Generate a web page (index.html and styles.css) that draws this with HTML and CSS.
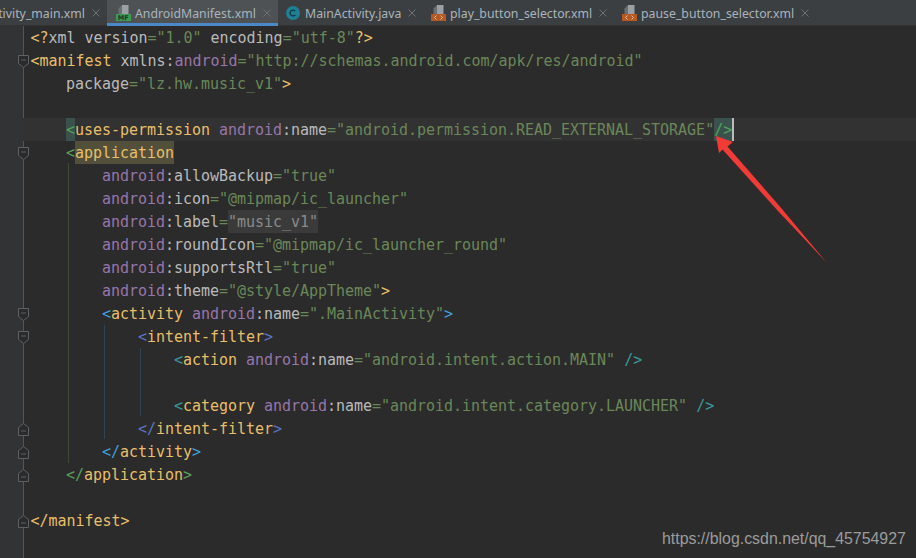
FILE: index.html
```html
<!DOCTYPE html>
<html lang="en">
<head>
<meta charset="utf-8">
<title>AndroidManifest.xml</title>
<link rel="stylesheet" href="styles.css">
</head>
<body>
<div class="ide">
  <div class="tabs">
    <div class="tab tab-first"><span class="tab-name">ctivity_main.xml</span><svg class="close" viewBox="0 0 8 8"><path d="M.5.5l7 7M7.500.5l-7 7"/></svg></div>
    <div class="tab tab-active">
      <svg class="file-icon" viewBox="0 0 15 16"><path class="fold-corner" d="M2.500 9V3.500L6 0v9z"/><path class="fold-light" d="M6 0h6.500v9H6z"/><rect class="mf-bg" x="0" y="9" width="15" height="7"/><text class="mf-text" x="1.800" y="15">MF</text></svg>
      <span class="tab-name">AndroidManifest.xml</span><svg class="close" viewBox="0 0 8 8"><path d="M.5.5l7 7M7.500.5l-7 7"/></svg></div>
    <div class="tab tab-class">
      <svg class="class-icon" viewBox="0 0 14 14"><circle cx="7" cy="7" r="7" fill="#1f7f94"/><path d="M9.300 5.200A2.900 2.900 0 1 0 9.300 8.800" fill="none" stroke="#0e3640" stroke-width="1.300"/></svg>
      <span class="tab-name">MainActivity.java</span><svg class="close" viewBox="0 0 8 8"><path d="M.5.5l7 7M7.500.5l-7 7"/></svg></div>
    <div class="tab tab-play">
      <svg class="file-icon" viewBox="0 0 15 16"><path class="fold-corner" d="M2.500 9V3.500L6 0v9z"/><path class="fold-light" d="M6 0h6.500v9H6z"/><rect class="xml-bg" x="0" y="9" width="15" height="7"/><path class="xml-mark" d="M5.500 10.500l-2 2 2 2M9.500 10.500l2 2-2 2"/></svg>
      <span class="tab-name">play_button_selector.xml</span><svg class="close" viewBox="0 0 8 8"><path d="M.5.5l7 7M7.500.5l-7 7"/></svg></div>
    <div class="tab">
      <svg class="file-icon" viewBox="0 0 15 16"><path class="fold-corner" d="M2.500 9V3.500L6 0v9z"/><path class="fold-light" d="M6 0h6.500v9H6z"/><rect class="xml-bg" x="0" y="9" width="15" height="7"/><path class="xml-mark" d="M5.500 10.500l-2 2 2 2M9.500 10.500l2 2-2 2"/></svg>
      <span class="tab-name">pause_button_selector.xml</span><svg class="close" viewBox="0 0 8 8"><path d="M.5.5l7 7M7.500.5l-7 7"/></svg></div>
  </div>
  <div class="editor">
    <div class="gutter">
      <span class="fold-line"></span>
      <svg class="fold f2" viewBox="0 0 11 13"><path d="M.5.500h10v8l-5 4-5-4zM3 5h5"/></svg>
      <svg class="fold f6" viewBox="0 0 11 13"><path d="M.5.500h10v8l-5 4-5-4zM3 5h5"/></svg>
      <svg class="fold f13" viewBox="0 0 11 13"><path d="M.5.500h10v8l-5 4-5-4zM3 5h5"/></svg>
      <svg class="fold f14" viewBox="0 0 11 13"><path d="M.5.500h10v8l-5 4-5-4zM3 5h5"/></svg>
      <svg class="fold f18" viewBox="0 0 11 13"><path d="M.5 12.500h10v-8l-5-4-5 4zM3 8h5"/></svg>
      <svg class="fold f19" viewBox="0 0 11 13"><path d="M.5 12.500h10v-8l-5-4-5 4zM3 8h5"/></svg>
      <svg class="fold f20" viewBox="0 0 11 13"><path d="M.5 12.500h10v-8l-5-4-5 4zM3 8h5"/></svg>
      <svg class="fold f22" viewBox="0 0 11 13"><path d="M.5 12.500h10v-8l-5-4-5 4zM3 8h5"/></svg>
    </div>
    <div class="code">
      <span class="guide g-app"></span><span class="guide g-act"></span><span class="guide g-filter"></span>
      <div class="line"><span class="o">&lt;?</span><span class="n">xml</span> <span class="n">version</span><span class="e">=</span><span class="s">"1.0"</span> <span class="n">encoding</span><span class="e">=</span><span class="s">"utf-8"</span><span class="o">?&gt;</span></div>
      <div class="line"><span class="o">&lt;manifest</span> <span class="n">xmlns:</span><span class="p">android</span><span class="e">=</span><span class="s">"http://schemas.android.com/apk/res/android"</span></div>
      <div class="line i1"><span class="n">package</span><span class="e">=</span><span class="s">"lz.hw.music_v1"</span><span class="o">&gt;</span></div>
      <div class="line"></div>
      <div class="line i1 current"><span class="match">&lt;</span><span class="o">uses-permission</span> <span class="p">android</span><span class="n">:name</span><span class="e">=</span><span class="s">"android.permission.READ_EXTERNAL_STORAGE"</span><span class="match">/&gt;</span><span class="caret"></span></div>
      <div class="line i1"><span class="g">&lt;</span><span class="tag-hl">application</span></div>
      <div class="line i2"><span class="p">android</span><span class="n">:allowBackup</span><span class="e">=</span><span class="s">"true"</span></div>
      <div class="line i2"><span class="p">android</span><span class="n">:icon</span><span class="e">=</span><span class="s">"@mipmap/ic_launcher"</span></div>
      <div class="line i2"><span class="p">android</span><span class="n">:label</span><span class="e">=</span><span class="s folded">"music_v1"</span></div>
      <div class="line i2"><span class="p">android</span><span class="n">:roundIcon</span><span class="e">=</span><span class="s">"@mipmap/ic_launcher_round"</span></div>
      <div class="line i2"><span class="p">android</span><span class="n">:supportsRtl</span><span class="e">=</span><span class="s">"true"</span></div>
      <div class="line i2"><span class="p">android</span><span class="n">:theme</span><span class="e">=</span><span class="s">"@style/AppTheme"</span><span class="o">&gt;</span></div>
      <div class="line i2"><span class="b">&lt;</span><span class="o">activity</span> <span class="p">android</span><span class="n">:name</span><span class="e">=</span><span class="s">".MainActivity"</span><span class="b">&gt;</span></div>
      <div class="line i3"><span class="v">&lt;</span><span class="o">intent-filter</span><span class="v">&gt;</span></div>
      <div class="line i4"><span class="c">&lt;</span><span class="o">action</span> <span class="p">android</span><span class="n">:name</span><span class="e">=</span><span class="s">"android.intent.action.MAIN"</span> <span class="c">/&gt;</span></div>
      <div class="line"></div>
      <div class="line i4"><span class="c">&lt;</span><span class="o">category</span> <span class="p">android</span><span class="n">:name</span><span class="e">=</span><span class="s">"android.intent.category.LAUNCHER"</span> <span class="c">/&gt;</span></div>
      <div class="line i3"><span class="v">&lt;/</span><span class="o">intent-filter</span><span class="v">&gt;</span></div>
      <div class="line i2"><span class="b">&lt;/</span><span class="o">activity</span><span class="b">&gt;</span></div>
      <div class="line i1"><span class="g">&lt;/</span><span class="o">application</span><span class="g">&gt;</span></div>
      <div class="line"></div>
      <div class="line"><span class="o">&lt;/manifest&gt;</span></div>
    </div>
  </div>
  <svg class="arrow" viewBox="0 0 916 558"><path d="M716 136L733 142 727.500 146.500 782 209 827 263 778 211 722.500 149.500 719 153z"/></svg>
  <div class="watermark">https://blog.csdn.net/qq_45754927</div>
</div>
</body>
</html>
```
FILE: styles.css
```css
html, body { margin: 0; padding: 0; background: #2b2b2b; }
.ide { position: relative; width: 916px; height: 558px; overflow: hidden; background: #2b2b2b; }

.tabs {
  display: flex;
  height: 26px;
  background: #3c3f41;
  box-shadow: inset 0 -1px 0 #323232;
  font: 12.300px "Noto Sans", sans-serif;
  color: #a9b4bc;
}
.tab { display: flex; align-items: center; height: 26px; padding: 0 8px 0 8px; flex: none; box-sizing: border-box; }
.tab-first { width: 107px; justify-content: flex-end; padding-right: 7px; }
.tab-active { width: 171px; background: #4e5254; box-shadow: inset 0 -3px 0 #4a88c7; padding-left: 9px; }
.tab-class { width: 145px; }
.tab-play { width: 191px; }
.tab-name { white-space: nowrap; }
.close { width: 8px; height: 8px; margin-left: 7px; fill: none; stroke: #6e7173; stroke-width: 1; flex: none; }
.file-icon { width: 15px; height: 16px; margin-right: 4px; flex: none; }
.class-icon { width: 14px; height: 14px; margin-right: 5px; flex: none; }
.fold-light { fill: #9aa0a4; }
.fold-corner { fill: #6b6f72; }
.mf-bg { fill: #3f9a56; }
.mf-text { font: bold 6.500px "DejaVu Sans", sans-serif; fill: #24352a; }
.xml-bg { fill: #b65a25; }
.xml-mark { fill: none; stroke: #e6b796; stroke-width: 1; }

.editor { display: flex; height: 532px; }
.gutter { position: relative; width: 23px; flex: none; background: #313335; }
.fold-line { position: absolute; left: 23px; top: 0; bottom: 0; width: 1px; background: #555; }
.fold { position: absolute; left: 18px; width: 11px; height: 13px; fill: #2b2b2b; stroke: #5f6163; stroke-width: 1; }
.f2 { top: 29px; }
.f6 { top: 121px; }
.f13 { top: 282px; }
.f14 { top: 305px; }
.f18 { top: 397px; }
.f19 { top: 420px; }
.f20 { top: 443px; }
.f22 { top: 489px; }

.code {
  position: relative;
  flex: 1;
  padding-left: 7.500px;
  font: 15px/25px "DejaVu Sans Mono", monospace;
  letter-spacing: -0.03px;
  color: #a9b7c6;
}
.line { height: 23px; white-space: pre; }
.i1 { padding-left: 35.500px; }
.i2 { padding-left: 71.500px; }
.i3 { padding-left: 107.500px; }
.i4 { padding-left: 143.500px; }
.current { background: #323232; margin-left: -7.500px; padding-left: 43px; }

.o { color: #e8bf6a; }
.n { color: #bababa; }
.p { color: #9876aa; }
.e { color: #6a8759; }
.s { color: #6a8759; }
.g { color: #5a9e5f; }
.b { color: #3f9fdc; }
.v { color: #5a74c0; }
.c { color: #3a9a9a; }
.match { background: #3b514d; color: #4fa35a; display: inline-block; height: 23px; vertical-align: top; }
.caret { display: inline-block; width: 2px; height: 23px; background: #bbbbbb; vertical-align: top; }
.tag-hl { color: #e8bf6a; background: #52503a; display: inline-block; height: 23px; vertical-align: top; }
.folded { background: #3a3a3a; color: #8a8a8a; display: inline-block; height: 23px; vertical-align: top; }

.guide { position: absolute; width: 1px; }
.g-app { left: 45px; top: 137px; height: 300px; background: #3a4a35; }
.g-act { left: 81px; top: 299px; height: 114px; background: #2f4555; }
.g-filter { left: 117px; top: 322px; height: 68px; background: #2f4555; }

.arrow { position: absolute; left: 0; top: 0; width: 916px; height: 558px; pointer-events: none; fill: #f03b36; }
.watermark {
  position: absolute;
  left: 662px;
  top: 529px;
  font: 15.900px/20px "Liberation Sans", sans-serif;
  color: #9b9b9b;
  white-space: nowrap;
}
```
